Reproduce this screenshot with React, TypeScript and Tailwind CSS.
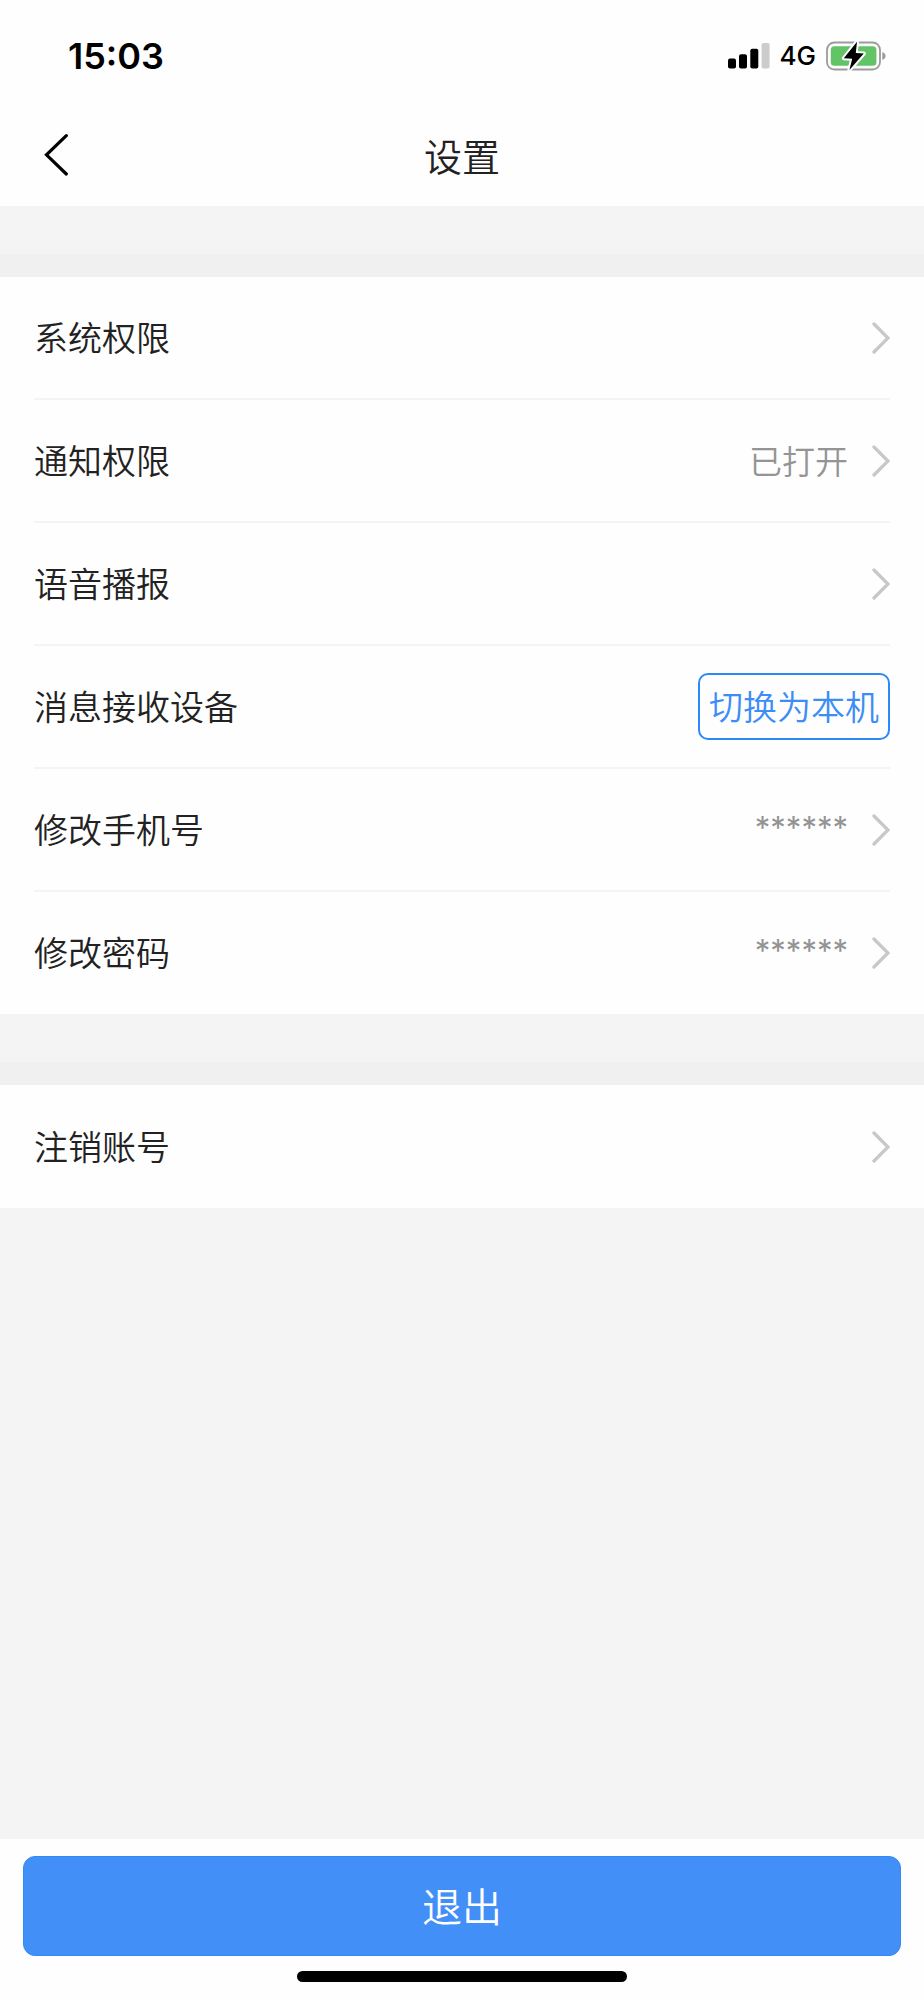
type Row = { label: string; value?: string; masked?: boolean; action?: string };

const rows: Row[] = [
  { label: "系统权限" },
  { label: "通知权限", value: "已打开" },
  { label: "语音播报" },
  { label: "消息接收设备", action: "切换为本机" },
  { label: "修改手机号", value: "******", masked: true },
  { label: "修改密码", value: "******", masked: true },
];

function Chevron() {
  return (
    <svg className="h-8 w-[18px] shrink-0" viewBox="0 0 18 32" fill="none" stroke="#c8c8c8" strokeWidth="3.3" aria-hidden="true">
      <path d="M2 2 L16 16 L2 30" strokeLinecap="round" />
    </svg>
  );
}

function StatusBar() {
  return (
    <div className="flex h-28 items-center justify-between pr-[38px] pl-[68px] font-['Inter',sans-serif] text-black">
      <span className="text-[36px] leading-10 font-semibold">15:03</span>
      <div className="flex items-center gap-[10px]">
        <svg className="h-[26px] w-[42px]" viewBox="0 0 42 26" aria-hidden="true">
          <rect x="0" y="15.5" width="8" height="10" rx="2" />
          <rect x="11" y="11.3" width="8" height="14.2" rx="2" />
          <rect x="22.3" y="5.7" width="8" height="19.8" rx="2" />
          <rect x="33.6" y="0" width="8" height="25.5" rx="2" fill="#cccccc" />
        </svg>
        <span className="text-[26px] leading-8 font-[450]">4G</span>
        <svg className="h-[30px] w-[60px]" viewBox="0 0 60 30" aria-hidden="true">
          <rect x="1" y="1.5" width="53" height="27" rx="7.5" fill="none" stroke="#9b9b9b" strokeWidth="1.8" />
          <path d="M56.3 11 Q59.6 12.3 59.6 15 Q59.6 17.7 56.3 19 Z" fill="#9b9b9b" />
          <rect x="4.8" y="5.3" width="45.6" height="19.4" rx="3.5" fill="#62c466" />
          <path
            d="M31 0.8 L17.8 17.2 L26.2 17.8 L23.4 29 L37.8 12.6 L29.8 12 Z"
            fill="#000"
            stroke="#fff"
            strokeWidth="4"
            strokeLinejoin="round"
            paintOrder="stroke"
          />
        </svg>
      </div>
    </div>
  );
}

function Separator() {
  return (
    <div className="h-[71px] bg-[#f4f4f4] pt-12">
      <div className="h-full bg-[#f0f0f0]" />
    </div>
  );
}

function SettingRow({ label, value, masked, action }: Row) {
  if (action) {
    return (
      <div className="flex h-full items-center justify-between">
        <span className="pb-0.5">{label}</span>
        <button type="button" className="h-[67px] rounded-[10px] border-2 border-[#2b8af8] px-[9px] pb-0.5 text-[#3d8df7]">
          {action}
        </button>
      </div>
    );
  }
  return (
    <button type="button" className="flex h-full w-full items-center gap-6 text-left">
      <span className="flex-1 pb-0.5">{label}</span>
      {value && (
        <span className={masked ? "pb-1 font-['Inter',sans-serif] text-[31px] font-normal text-[#949494]" : "pb-0.5 text-[33px] text-[#949494]"}>
          {value}
        </span>
      )}
      <Chevron />
    </button>
  );
}

export default function App() {
  return (
    <div className="flex min-h-screen flex-col bg-[#f4f4f4] font-['Noto_Sans_CJK_SC',sans-serif] text-[34px] leading-[50px] font-[350] text-[#222222]">
      <header className="bg-[#fefefe]">
        <StatusBar />
        <div className="grid h-[94px] grid-cols-[1fr_auto_1fr] items-center px-11 pb-2">
          <button type="button" aria-label="返回" className="w-6">
            <svg className="h-[42px] w-6" viewBox="0 0 24 42" fill="none" stroke="#000" strokeWidth="3.2" strokeLinecap="round" aria-hidden="true">
              <path d="M22.3 1.7 L2.5 20.8 L22.3 40" />
            </svg>
          </button>
          <h1 className="text-[38px]">设置</h1>
        </div>
      </header>
      <main className="flex-1">
        <Separator />
        <ul className="divide-y-2 divide-[#f4f4f4] bg-[#fefefe] px-[34px]">
          {rows.map((row) => (
            <li key={row.label} className="h-[123px] last:h-[122px]">
              <SettingRow {...row} />
            </li>
          ))}
        </ul>
        <Separator />
        <div className="h-[123px] bg-[#fefefe] px-[34px]">
          <SettingRow label="注销账号" />
        </div>
      </main>
      <footer className="flex flex-col items-center bg-[#fefefe] px-[23px] pt-[17px] pb-[18px]">
        <button type="button" className="h-[100px] w-full rounded-xl border border-[#2f8bf8] bg-[#438ff8] pb-0.5 text-[40px] text-white">
          退出
        </button>
        <div className="mt-[15px] h-[11px] w-[330px] rounded-full bg-black" />
      </footer>
    </div>
  );
}
